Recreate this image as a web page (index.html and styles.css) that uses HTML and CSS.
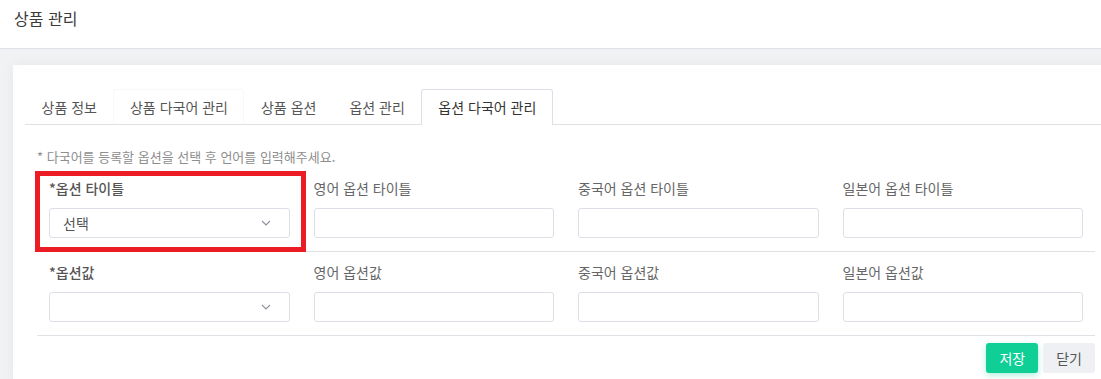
FILE: index.html
```html
<!DOCTYPE html>
<html lang="ko">
<head>
    <meta charset="UTF-8">
    <meta name="viewport" content="width=device-width, initial-scale=1.0">
    <title>상품 관리</title>
    <link rel="stylesheet" href="styles.css">
</head>
<body>
    <header class="page-header">상품 관리</header>

    <main class="page-body">
        <div class="card">
            <ul class="tabs">
                <li class="tab">상품 정보</li>
                <li class="tab tab-hover">상품 다국어 관리</li>
                <li class="tab">상품 옵션</li>
                <li class="tab">옵션 관리</li>
                <li class="tab active">옵션 다국어 관리</li>
            </ul>

            <div class="tab-panel">
                <p class="notice">* 다국어를 등록할 옵션을 선택 후 언어를 입력해주세요.</p>

                <!-- 옵션 타이틀 -->
                <div class="form-row">
                    <div class="field marked">
                        <label class="required">*옵션 타이틀</label>
                        <div class="select">
                            <span>선택</span>
                            <svg class="chevron" width="10" height="6" viewBox="0 0 10 6"><polyline points="1,1 5,5 9,1" fill="none" stroke="#8c919b" stroke-width="1.1"/></svg>
                        </div>
                    </div>
                    <div class="field">
                        <label>영어 옵션 타이틀</label>
                        <input type="text" class="input">
                    </div>
                    <div class="field">
                        <label>중국어 옵션 타이틀</label>
                        <input type="text" class="input">
                    </div>
                    <div class="field">
                        <label>일본어 옵션 타이틀</label>
                        <input type="text" class="input">
                    </div>
                </div>

                <!-- 옵션값 -->
                <div class="form-row">
                    <div class="field">
                        <label class="required">*옵션값</label>
                        <div class="select">
                            <span></span>
                            <svg class="chevron" width="10" height="6" viewBox="0 0 10 6"><polyline points="1,1 5,5 9,1" fill="none" stroke="#8c919b" stroke-width="1.1"/></svg>
                        </div>
                    </div>
                    <div class="field">
                        <label>영어 옵션값</label>
                        <input type="text" class="input">
                    </div>
                    <div class="field">
                        <label>중국어 옵션값</label>
                        <input type="text" class="input">
                    </div>
                    <div class="field">
                        <label>일본어 옵션값</label>
                        <input type="text" class="input">
                    </div>
                </div>

                <div class="actions">
                    <button class="btn btn-save">저장</button>
                    <button class="btn btn-close">닫기</button>
                </div>
            </div>
        </div>
    </main>
</body>
</html>
```

FILE: styles.css
```css
body {
    font-family: "Noto Sans CJK KR", "Noto Sans", sans-serif;
    margin: 0;
    background-color: #f1f2f4;
    color: #333;
    overflow: hidden;
}
.page-header {
    height: 49px;
    box-sizing: border-box;
    padding: 7px 14px;
    font-size: 16px;
    line-height: 22px;
    color: #3a3a3a;
    background: white;
    border-bottom: 1px solid #dfe1e8;
}
.page-body {
    padding: 16px 0 0 13px;
}
.card {
    box-sizing: border-box;
    width: 1106px;
    background: white;
    padding: 24px 12px 12px;
    box-shadow: 0 0 12px rgba(0, 0, 0, 0.05);
}
.tabs {
    display: flex;
    list-style: none;
    margin: 0;
    padding: 0;
    border-bottom: 1px solid #dfe1e6;
}
.tab {
    padding: 0 15.5px;
    font-size: 14px;
    line-height: 34px;
    color: #555;
    border: 1px solid transparent;
    border-bottom: none;
    border-radius: 3px 3px 0 0;
}
.tab-hover {
    border-color: #f8f8f9;
}
.tab.active {
    padding: 0 16px;
    color: #333;
    border-color: #dcdfe6;
    background: white;
    margin-bottom: -1px;
    line-height: 35px;
}
.tab-panel {
    padding: 0 12px;
}
.notice {
    margin: 23px 0 2px;
    font-size: 13px;
    line-height: 18px;
    color: #8e8e8e;
}
.form-row {
    display: grid;
    grid-template-columns: repeat(4, minmax(0, 1fr));
    padding: 10px 0 13px;
    border-bottom: 1px solid #dfe1e6;
}
.field {
    display: flex;
    flex-direction: column;
    padding: 0 12px;
    position: relative;
    min-width: 0;
}
.field label {
    font-size: 14px;
    line-height: 20px;
    color: #666;
    margin-bottom: 10px;
}
.field label.required {
    color: #555;
    font-weight: 500;
}
.select,
.input {
    width: 100%;
    height: 30px;
    box-sizing: border-box;
    border: 1px solid #dcdfe6;
    border-radius: 3px;
    background: white;
    font-family: inherit;
    font-size: 14px;
}
.select {
    display: flex;
    align-items: center;
    justify-content: space-between;
    padding: 0 18px 0 13px;
    color: #555;
}
.chevron {
    display: block;
}

/* 빨간 강조 박스 */
.marked::after {
    content: "";
    position: absolute;
    top: -7px;
    bottom: -14px;
    left: -2px;
    right: -4px;
    border: 5px solid #ec1c24;
    pointer-events: none;
}
.actions {
    display: flex;
    justify-content: flex-end;
    gap: 5px;
    margin-top: 7px;
}
.btn {
    height: 30px;
    padding: 0 13px;
    border: none;
    border-radius: 3px;
    font-family: inherit;
    font-size: 14px;
}
.btn-save {
    background: #0fcf97;
    color: white;
    box-shadow: 0 2px 6px rgba(15, 207, 151, 0.35);
}
.btn-close {
    background: #eef0f4;
    color: #555;
}
```
